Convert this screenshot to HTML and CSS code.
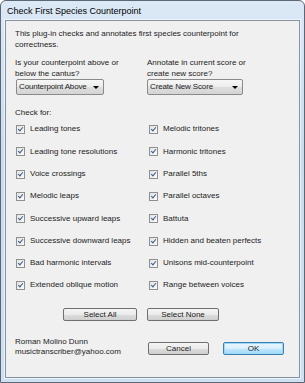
FILE: index.html
```html
<!DOCTYPE html>
<html lang="en">

<head>
    <meta charset="UTF-8">
    <title>Check First Species Counterpoint</title>
    <link rel="stylesheet" href="styles.css">
</head>

<body>
    <div class="window">
        <div class="titlebar">Check First Species Counterpoint</div>
        <div class="client">
            <p class="intro">This plug-in checks and annotates first species counterpoint for<br>correctness.</p>

            <div class="options">
                <div class="option option-left">
                    <div class="label">Is your counterpoint above or<br>below the cantus?</div>
                    <div class="combo combo-left">Counterpoint Above<span class="arrow"></span></div>
                </div>
                <div class="option">
                    <div class="label">Annotate in current score or<br>create new score?</div>
                    <div class="combo combo-right">Create New Score<span class="arrow"></span></div>
                </div>
            </div>

            <div class="check-title">Check for:</div>
            <div class="checks">
                <label class="check"><span class="box"></span>Leading tones</label>
                <label class="check"><span class="box"></span>Melodic tritones</label>
                <label class="check"><span class="box"></span>Leading tone resolutions</label>
                <label class="check"><span class="box"></span>Harmonic tritones</label>
                <label class="check"><span class="box"></span>Voice crossings</label>
                <label class="check"><span class="box"></span>Parallel 5ths</label>
                <label class="check"><span class="box"></span>Melodic leaps</label>
                <label class="check"><span class="box"></span>Parallel octaves</label>
                <label class="check"><span class="box"></span>Successive upward leaps</label>
                <label class="check"><span class="box"></span>Battuta</label>
                <label class="check"><span class="box"></span>Successive downward leaps</label>
                <label class="check"><span class="box"></span>Hidden and beaten perfects</label>
                <label class="check"><span class="box"></span>Bad harmonic intervals</label>
                <label class="check"><span class="box"></span>Unisons mid-counterpoint</label>
                <label class="check"><span class="box"></span>Extended oblique motion</label>
                <label class="check"><span class="box"></span>Range between voices</label>
            </div>

            <div class="select-row">
                <button class="btn btn-select">Select All</button>
                <button class="btn btn-select">Select None</button>
            </div>

            <div class="bottom-row">
                <div class="author">Roman Molino Dunn<br>musictranscriber@yahoo.com</div>
                <div class="actions">
                    <button class="btn btn-action">Cancel</button>
                    <button class="btn btn-action btn-default">OK</button>
                </div>
            </div>
        </div>
    </div>
</body>

</html>
```

FILE: styles.css
```css
:root {
    --frame: #cfe0f2;
    --frame-edge: #5d6773;
    --client-bg: #f0f0f0;
    --client-border: #8592a0;
    --text: #1c1c1c;
}

body {
    margin: 0;
    font-family: "Liberation Sans", Arial, sans-serif;
    font-size: 8px;
    color: var(--text);
}

.window {
    width: 305px;
    height: 383px;
    box-sizing: border-box;
    border: 1px solid var(--frame-edge);
    border-radius: 6px 6px 0 0;
    background: linear-gradient(#dbe8f6, #c9dcf0 40%, #cfe0f2);
    padding: 0 4px 4px 4px;
    display: flex;
    flex-direction: column;
}

.titlebar {
    height: 19px;
    line-height: 20px;
    padding-left: 2px;
    font-size: 9px;
    color: #000;
}

.client {
    flex: 1;
    background: var(--client-bg);
    border: 1px solid var(--client-border);
    box-shadow: 0 0 0 1px rgba(255, 255, 255, 0.6);
    padding: 8px 9px 0 9px;
    line-height: 10.5px;
}

.intro {
    margin: 0;
}

.options {
    display: flex;
    margin-top: 8px;
}

.option-left {
    width: 132px;
}

.combo {
    position: relative;
    height: 16px;
    box-sizing: border-box;
    margin-left: 1px;
    border: 1px solid #8a8a8a;
    border-radius: 2px;
    background: linear-gradient(#f6f6f6, #ececec 50%, #dedede 51%, #d4d4d4);
    line-height: 14px;
    padding-left: 2px;
    letter-spacing: -0.15px;
}

.combo-left {
    width: 88px;
}

.combo-right {
    width: 96px;
    margin-left: 0;
}

.arrow {
    position: absolute;
    right: 4px;
    top: 6px;
    border-left: 3px solid transparent;
    border-right: 3px solid transparent;
    border-top: 3px solid #000;
}

.check-title {
    margin-top: 13px;
}

.checks {
    display: grid;
    grid-template-columns: 133px 1fr;
    grid-auto-rows: 22.3px;
    align-items: center;
}

.check {
    display: flex;
    align-items: center;
    gap: 5px;
}

.box {
    width: 7px;
    height: 7px;
    margin-left: 1px;
    border: 1px solid #8e8f8f;
    background: linear-gradient(135deg, #e3e3e3, #fbfbfb);
    position: relative;
}

.box::after {
    content: "";
    position: absolute;
    left: 2px;
    top: 0;
    width: 2px;
    height: 4px;
    border-right: 1.3px solid #3d5a8f;
    border-bottom: 1.3px solid #3d5a8f;
    transform: rotate(40deg);
}

.select-row {
    display: flex;
    gap: 10px;
    margin-top: 11px;
    padding-left: 48px;
}

.btn {
    font-family: inherit;
    font-size: 8px;
    color: var(--text);
    height: 13px;
    padding: 0;
    border: 1px solid #707070;
    border-radius: 2px;
    background: linear-gradient(#f4f4f4, #ebebeb 50%, #dddddd 51%, #cfcfcf);
    line-height: 11px;
}

.btn-select {
    width: 74px;
}

.select-row .btn-select + .btn-select {
    width: 72px;
}

.bottom-row {
    display: flex;
    margin-top: 16px;
}

.author {
    width: 133px;
}

.actions {
    display: flex;
    gap: 14px;
    margin-top: 5px;
}

.btn-action {
    width: 61px;
}

.btn-default {
    border-color: #3c7fb1;
    box-shadow: inset 0 0 0 1px #9cd8f7;
    background: linear-gradient(#eaf6fd, #d9f0fc 50%, #bee6fd 51%, #a7d9f5);
}
```
